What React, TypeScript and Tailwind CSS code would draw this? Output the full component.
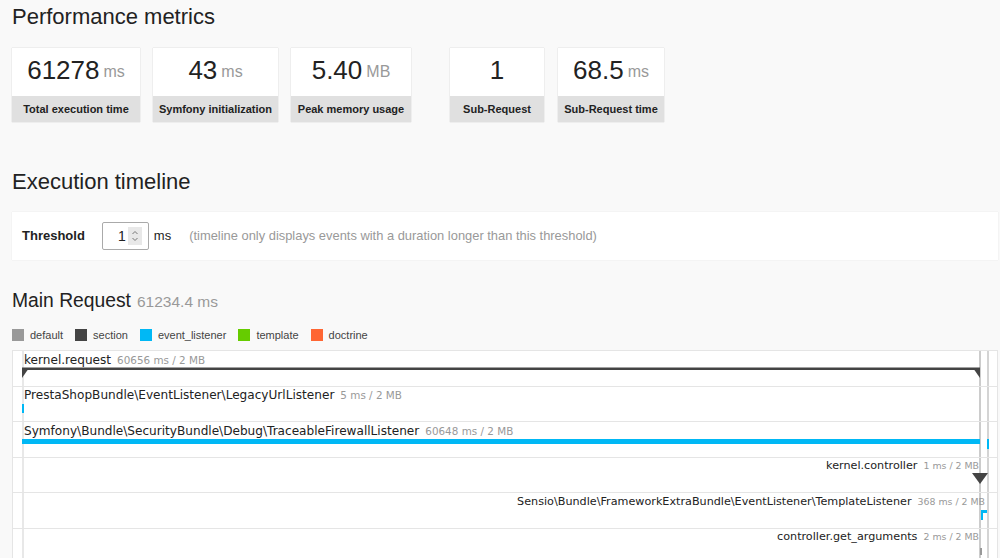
import React from "react"

type Metric = {
  value: string
  unit?: string
  label: string
  width: string
  gap: string
}

const metrics: Metric[] = [
  { value: "61278", unit: "ms", label: "Total execution time", width: "w-[128px]", gap: "ml-0" },
  { value: "43", unit: "ms", label: "Symfony initialization", width: "w-[125px]", gap: "ml-[13px]" },
  { value: "5.40", unit: "MB", label: "Peak memory usage", width: "w-[120px]", gap: "ml-[13px]" },
  { value: "1", label: "Sub-Request", width: "w-[94px]", gap: "ml-[39px]" },
  { value: "68.5", unit: "ms", label: "Sub-Request time", width: "w-[106px]", gap: "ml-[14px]" },
]

const legend = [
  { name: "default", color: "bg-[#999999]" },
  { name: "section", color: "bg-[#444444]" },
  { name: "event_listener", color: "bg-[#00b8f5]" },
  { name: "template", color: "bg-[#66cc00]" },
  { name: "doctrine", color: "bg-[#ff6633]" },
]

const MetricCard = ({ m }: { m: Metric }) => (
  <div className={`${m.width} ${m.gap} shadow-[0_0_1px_rgba(0,0,0,0.25)]`}>
    <div className="h-[48px] bg-white flex items-center justify-center pb-[4px]">
      <span className="text-[26px] leading-[30px] text-[#222]">{m.value}</span>
      {m.unit && (
        <span className="ml-[4px] text-[16px] leading-[30px] text-[#999] mt-[3px]">{m.unit}</span>
      )}
    </div>
    <div className="h-[26px] bg-[#e0e0e0] flex items-center justify-center">
      <span className="text-[11px] font-bold text-[#222] whitespace-nowrap">{m.label}</span>
    </div>
  </div>
)

// left labels are a touch larger than the ones hugging the right edge
const Label = ({ name, detail, small }: { name: string; detail: string; small?: boolean }) => (
  <div className="flex items-baseline whitespace-nowrap leading-[14px] pt-[1.5px]">
    <span className={`${small ? "text-[11.2px]" : "text-[12.1px]"} text-[#222]`}>{name}</span>
    <span className={`${small ? "ml-[6px] text-[9.4px]" : "ml-[6px] text-[10.4px]"} text-[#999]`}>
      {detail}
    </span>
  </div>
)

const Row = ({ children, right, pr }: { children: React.ReactNode; right?: boolean; pr?: string }) => (
  <div
    className={`relative h-[35.5px] border-b border-[#e5e5e5] flex ${
      right ? `justify-end ${pr}` : "pl-[11px]"
    }`}
  >
    {children}
  </div>
)

const Timeline = () => (
  <div
    className="relative ml-[12px] w-[986px] bg-white border border-[#e5e5e5] overflow-hidden h-[220px]"
    style={{ fontFamily: '"DejaVu Sans", Verdana, sans-serif' }}
  >
    {/* period guides */}
    <div className="absolute top-0 bottom-0 left-[9px] w-[2px] bg-[#e8e8e8]" />
    <div className="absolute top-0 bottom-0 left-[966px] w-[2px] bg-[#cccccc]" />
    <div className="absolute top-0 bottom-0 left-[974px] w-[2px] bg-[#d4d4d4]" />

    <Row>
      <Label name="kernel.request" detail="60656 ms / 2 MB" />
      <svg className="absolute left-[9px] top-[16px]" width="958" height="12" viewBox="0 0 958 12">
        <rect x="0" y="0.5" width="958" height="2.5" fill="#444" />
        <polygon points="0,1 7,1 0,11" fill="#444" />
        <polygon points="958,1 951,1 958,11" fill="#444" />
      </svg>
    </Row>

    <Row>
      <Label name="PrestaShopBundle\EventListener\LegacyUrlListener" detail="5 ms / 2 MB" />
      <div className="absolute left-[9px] top-[17px] w-[2px] h-[9px] bg-[#00b8f5]" />
    </Row>

    <Row>
      <Label name="Symfony\Bundle\SecurityBundle\Debug\TraceableFirewallListener" detail="60648 ms / 2 MB" />
      <div className="absolute left-[9px] top-[17px] w-[958px] h-[5px] bg-[#00b8f5]" />
      <div className="absolute left-[974px] top-[17px] w-[2px] h-[10px] bg-[#00b8f5]" />
    </Row>

    <Row right pr="pr-[18px]">
      <Label small name="kernel.controller" detail="1 ms / 2 MB" />
      <svg className="absolute left-[959px] top-[15.5px]" width="16" height="11" viewBox="0 0 16 11">
        <polygon points="0,0 16,0 8,11" fill="#444" />
      </svg>
    </Row>

    <Row right pr="pr-[12px]">
      <Label small name="Sensio\Bundle\FrameworkExtraBundle\EventListener\TemplateListener" detail="368 ms / 2 MB" />
      <div className="absolute left-[968px] top-[17px] w-[6px] h-[3px] bg-[#00b8f5]" />
      <div className="absolute left-[968px] top-[17px] w-[2px] h-[10px] bg-[#00b8f5]" />
    </Row>

    <Row right pr="pr-[18px]">
      <Label small name="controller.get_arguments" detail="2 ms / 2 MB" />
      <div className="absolute left-[967px] top-[19.5px] w-[2px] h-[7px] bg-[#999]" />
    </Row>
  </div>
)

export default function App() {
  return (
    <div
      className="w-[1000px] h-[558px] overflow-hidden bg-[#f9f9f9] text-[#222]"
      style={{ fontFamily: '"Liberation Sans", Arial, sans-serif' }}
    >
      <h2 className="pt-[4px] pl-[12px] text-[22px] leading-[26px]">Performance metrics</h2>

      <div className="flex mt-[18px] ml-[12px]">
        {metrics.map((m) => (
          <MetricCard key={m.label} m={m} />
        ))}
      </div>

      <h2 className="mt-[47px] pl-[12px] text-[22px] leading-[26px]">Execution timeline</h2>

      <div className="mt-[17px] ml-[12px] w-[986px] h-[48px] bg-white flex items-center pl-[10px] shadow-[0_0_1px_rgba(0,0,0,0.12)]">
        <span className="text-[13px] font-bold">Threshold</span>
        <div className="ml-[17px] w-[47px] h-[28px] border border-[#aaa] rounded-[2px] bg-white flex items-center justify-end pr-[6px]">
          <span className="text-[14px] mr-[2px]">1</span>
          <div className="w-[14px] h-[18px] bg-[#e8e8e8] flex items-center justify-center">
            <svg width="8" height="14" viewBox="0 0 8 14" fill="none" stroke="#777" strokeWidth="1">
              <path d="M1.5 5 L4 2.5 L6.5 5" />
              <path d="M1.5 9 L4 11.5 L6.5 9" />
            </svg>
          </div>
        </div>
        <span className="ml-[5px] text-[13px]">ms</span>
        <span className="ml-[18px] text-[12.9px] text-[#999]">
          (timeline only displays events with a duration longer than this threshold)
        </span>
      </div>

      <h3 className="mt-[29px] pl-[12px] leading-[24px] flex items-baseline">
        <span className="text-[19.3px]">Main Request</span>
        <span className="ml-[6px] text-[15.5px] text-[#999]">61234.4 ms</span>
      </h3>

      <div className="mt-[15px] ml-[12px] flex items-center h-[12px]">
        {legend.map((l) => (
          <div key={l.name} className="flex items-center mr-[12px]">
            <span className={`w-[12px] h-[12px] ${l.color}`} />
            <span className="ml-[6px] text-[11px] leading-[12px] text-[#444]">{l.name}</span>
          </div>
        ))}
      </div>

      <div className="mt-[9px]">
        <Timeline />
      </div>
    </div>
  )
}
